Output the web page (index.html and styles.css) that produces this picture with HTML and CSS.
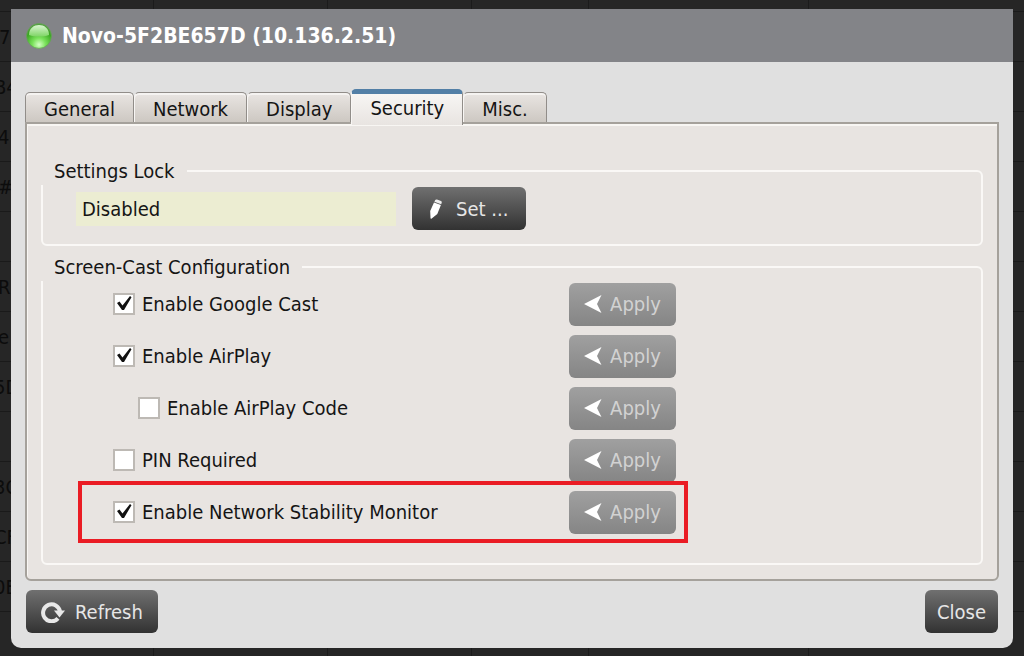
FILE: index.html
```html
<!DOCTYPE html>
<html lang="en">
<head>
<meta charset="utf-8">
<title>Novo-5F2BE657D (10.136.2.51)</title>
<link rel="stylesheet" href="styles.css">
</head>
<body>
<div class="backdrop" aria-hidden="true">
  <div class="row"></div>
  <div class="row">7D</div>
  <div class="row wide">B4</div>
  <div class="row narrow">4</div>
  <div class="row narrow">#</div>
  <div class="row"></div>
  <div class="row narrow">R</div>
  <div class="row narrow">e</div>
  <div class="row wide">5D</div>
  <div class="row"></div>
  <div class="row wide">3C</div>
  <div class="row wide">CF</div>
  <div class="row wide">0E</div>
  <div class="row"></div>
</div>
<main class="dialog" role="dialog" aria-labelledby="title">
  <header class="titlebar">
    <svg class="led" viewBox="0 0 26 26" aria-hidden="true">
      <defs>
        <radialGradient id="ball" cx="50%" cy="85%" r="75%">
          <stop offset="0" stop-color="#d4ffc4"/>
          <stop offset=".35" stop-color="#7be35c"/>
          <stop offset=".8" stop-color="#38a51f"/>
          <stop offset="1" stop-color="#4f9c3c"/>
        </radialGradient>
        <linearGradient id="shine" x1="0" y1="0" x2="0" y2="1">
          <stop offset="0" stop-color="#d9f5d0"/>
          <stop offset="1" stop-color="#7fd566"/>
        </linearGradient>
      </defs>
      <circle cx="13" cy="13" r="12.4" fill="url(#ball)" stroke="#66a457" stroke-width=".8"/>
      <path d="M3 12C3 5 8 2 13 2s10 3 10 10c-6 2-14 2-20 0z" fill="url(#shine)"/>
    </svg>
    <h1 class="title" id="title">Novo-5F2BE657D (10.136.2.51)</h1>
  </header>
  <div class="content">
    <div class="tabs" role="tablist">
      <button class="tab" role="tab">General</button>
      <button class="tab" role="tab">Network</button>
      <button class="tab" role="tab">Display</button>
      <button class="tab active" role="tab" aria-selected="true">Security</button>
      <button class="tab" role="tab">Misc.</button>
    </div>
    <div class="panel" role="tabpanel">
      <fieldset class="group">
        <legend>Settings Lock</legend>
        <div class="lock">
          <input class="status" type="text" value="Disabled" aria-label="Settings Lock" readonly>
          <button class="btn set">
            <svg class="icon" viewBox="0 0 20 20" aria-hidden="true"><path d="M9 1.500Q9.500.2 11 .5l4 1.500q1.200.6.700 1.800l-.5 1.400-6.800-2.400z" fill="#eee"/><path d="M8 3.600l6.900 2.500-3.600 8.900-5.900 4.700q-.9.300-.9-.7L4.200 12z" fill="#fff"/></svg>
            Set ...
          </button>
        </div>
      </fieldset>
      <fieldset class="group">
        <legend>Screen-Cast Configuration</legend>
        <div class="options">
          <div class="option">
            <label><input class="check" type="checkbox" checked>Enable Google Cast</label>
            <button class="btn apply" disabled><svg class="arrow" viewBox="0 0 18 18" aria-hidden="true"><path d="M0 9L17.500 0 13 9l4.500 9z" fill="#fff"/></svg>Apply</button>
          </div>
          <div class="option">
            <label><input class="check" type="checkbox" checked>Enable AirPlay</label>
            <button class="btn apply" disabled><svg class="arrow" viewBox="0 0 18 18" aria-hidden="true"><path d="M0 9L17.500 0 13 9l4.500 9z" fill="#fff"/></svg>Apply</button>
          </div>
          <div class="option">
            <label class="nested"><input class="check" type="checkbox">Enable AirPlay Code</label>
            <button class="btn apply" disabled><svg class="arrow" viewBox="0 0 18 18" aria-hidden="true"><path d="M0 9L17.500 0 13 9l4.500 9z" fill="#fff"/></svg>Apply</button>
          </div>
          <div class="option">
            <label><input class="check" type="checkbox">PIN Required</label>
            <button class="btn apply" disabled><svg class="arrow" viewBox="0 0 18 18" aria-hidden="true"><path d="M0 9L17.500 0 13 9l4.500 9z" fill="#fff"/></svg>Apply</button>
          </div>
          <div class="option marked">
            <label><input class="check" type="checkbox" checked>Enable Network Stability Monitor</label>
            <button class="btn apply" disabled><svg class="arrow" viewBox="0 0 18 18" aria-hidden="true"><path d="M0 9L17.500 0 13 9l4.500 9z" fill="#fff"/></svg>Apply</button>
          </div>
        </div>
      </fieldset>
    </div>
    <footer class="footer">
      <button class="btn refresh">
        <svg class="reload" viewBox="0 0 24 22" aria-hidden="true"><path d="M17 17.400A8.500 8.500 0 1 1 19 10.500" fill="none" stroke="#e8e8e8" stroke-width="4"/><path d="M13 9.500h11l-5.500 7z" fill="#e8e8e8"/></svg>
        Refresh
      </button>
      <button class="btn close">Close</button>
    </footer>
  </div>
</main>
</body>
</html>
```
FILE: styles.css
```css
* {
  box-sizing: border-box;
}

body {
  margin: 0;
  min-height: 100vh;
  padding: 9px 11px 8px;
  display: flex;
  position: relative;
  background: #232425;
  color: #151515;
  font-family: "DejaVu Sans Condensed", "Noto Sans", sans-serif;
  font-size: 20px;
  line-height: 28px;
}

button,
input {
  font: inherit;
  color: inherit;
}

.backdrop {
  position: absolute;
  inset: 0;
  overflow: hidden;
  background:
    linear-gradient(#1b1b1b, #1b1b1b) 153px 0 / 1px 100% no-repeat,
    linear-gradient(#1b1b1b, #1b1b1b) 327px 0 / 1px 100% no-repeat,
    linear-gradient(#1b1b1b, #1b1b1b) 471px 0 / 1px 100% no-repeat,
    linear-gradient(#1b1b1b, #1b1b1b) 588px 0 / 1px 100% no-repeat,
    linear-gradient(#1b1b1b, #1b1b1b) 808px 0 / 1px 100% no-repeat,
    #262626;
  color: #0c0c0c;
}

.row {
  height: 50px;
  line-height: 50px;
  text-indent: -1px;
  border-bottom: 1px solid #1a1a1a;
}

.row:first-child {
  height: 12px;
}

.wide {
  text-indent: -6px;
}

.narrow {
  text-indent: -2px;
}

.dialog {
  position: relative;
  flex: 1;
  display: flex;
  flex-direction: column;
  border-radius: 0 0 10px 10px;
  background: #e0e0e0;
}

.titlebar {
  display: flex;
  align-items: center;
  gap: 10px;
  height: 53px;
  padding: 0 15px;
  background: #838488;
}

.led {
  width: 26px;
  height: 26px;
}

.title {
  margin: 0;
  color: #fff;
  font-size: 21px;
  font-weight: 700;
}

.content {
  flex: 1;
  display: flex;
  flex-direction: column;
  padding: 27px 14px 15px;
}

.tabs {
  display: flex;
  align-items: flex-end;
}

.tab {
  height: 30px;
  padding: 2px 18px 0;
  border: 1px solid #918d89;
  border-left-color: #f8f6f4;
  border-bottom: 0;
  border-radius: 5px 5px 0 0;
  background: linear-gradient(#e9e5e2, #cdc8c2);
  box-shadow: inset 0 2px #f5f3f1;
}

.tab:first-child {
  border-left-color: #918d89;
}

.tab.active {
  position: relative;
  height: 36px;
  margin-bottom: -3px;
  padding-top: 0;
  padding-bottom: 3px;
  border-top: 5px solid #527fa6;
  background: linear-gradient(#f7f5f3, #e8e4e1);
  box-shadow: none;
}

.panel {
  flex: 1;
  padding: 33px 14px 14px;
  border: 2px solid #a5a19b;
  border-radius: 0 0 6px 6px;
  background: #e8e4e1;
  box-shadow: inset 1px 2px #f8f6f3;
}

.group {
  margin: 0 0 7px;
  padding: 0;
  border: 2px solid #faf8f6;
  border-radius: 6px;
}

.group:last-child {
  margin-bottom: 0;
}

.group legend {
  margin-left: -2px;
  padding: 0 12px 0 13px;
}

.lock {
  display: flex;
  align-items: center;
  gap: 16px;
  padding: 2px 0 14px 33px;
}

.status {
  width: 320px;
  height: 34px;
  padding: 0 6px;
  border: 0;
  background: #ecedd2;
}

.btn {
  display: flex;
  align-items: center;
  justify-content: center;
  gap: 10px;
  height: 43px;
  padding: 0 15px;
  border: 0;
  border-radius: 6px;
  background: linear-gradient(#707070, #323232);
  color: #e6e6e6;
}

.btn.set {
  padding: 0 18px 0 14px;
}

.btn.apply {
  width: 107px;
  gap: 8px;
  background: linear-gradient(#a0a0a0, #858585);
  color: #d2d2d2;
}

.btn.close {
  padding: 0 12px;
}

.icon {
  width: 20px;
  height: 20px;
}

.arrow {
  width: 18px;
  height: 18px;
}

.reload {
  width: 24px;
  height: 22px;
}

.options {
  display: flex;
  flex-direction: column;
  align-items: flex-start;
  margin-top: -3px;
  padding: 0 0 20px 35px;
}

.option {
  display: flex;
  align-items: center;
  justify-content: space-between;
  width: 610px;
  height: 52px;
  padding: 0 12px 0 35px;
}

.option label {
  display: flex;
  align-items: center;
  gap: 7px;
}

.option .nested {
  margin-left: 25px;
}

.option.marked {
  height: 62px;
  margin-top: -5px;
  padding: 0 8px 0 31px;
  border: 4px solid #ea1c24;
}

.check {
  appearance: none;
  width: 22px;
  height: 22px;
  margin: 0;
  border: 2px solid #bdb9b4;
  background: #fff;
}

.check:checked {
  background: #fff url("data:image/svg+xml,%3Csvg xmlns='http://www.w3.org/2000/svg' viewBox='0 0 18 18'%3E%3Cpath d='M2 8l2.500-1.500 3 4L15 1l1.500 1.200L9 15H7z' fill='%23111'/%3E%3C/svg%3E") center / 18px 18px no-repeat;
}

.footer {
  display: flex;
  justify-content: space-between;
  padding: 9px 1px 0;
}
```
